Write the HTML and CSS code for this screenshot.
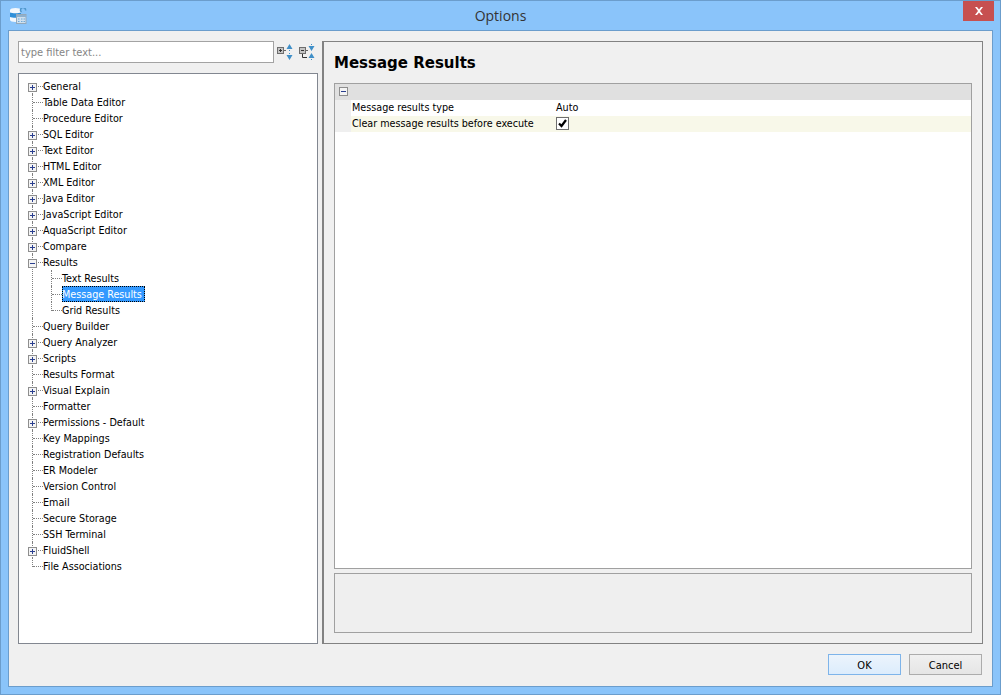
FILE: index.html
```html
<!DOCTYPE html>
<html lang="en">
<head>
<meta charset="utf-8">
<title>Options</title>
<link rel="stylesheet" href="styles.css">
</head>
<body>
<svg class="defs" width="0" height="0" aria-hidden="true">
  <symbol id="plus" viewBox="0 0 9 9"><rect x=".5" y=".5" width="8" height="8" fill="#f4f4f4" stroke="#8e8e8e"/><path d="M2 4.500h5M4.500 2v5" stroke="#2a3f8f" fill="none"/></symbol>
  <symbol id="minus" viewBox="0 0 9 9"><rect x=".5" y=".5" width="8" height="8" fill="#f4f4f4" stroke="#8e8e8e"/><path d="M2 4.500h5" stroke="#2a3f8f" fill="none"/></symbol>
</svg>
<div class="window">
  <header class="titlebar">
    <svg class="appicon" width="17" height="16" viewBox="0 0 17 16">
      <path d="M0 2C0 .8 2.500 0 5.500 0S11 .8 11 2v10c0 1.200-2.500 2-5.500 2S0 13.200 0 12Z" fill="#f4f8fc"/>
      <path d="M0 4.500c2 1 9 1 11 0V9c-2 1-9 1-11 0Z" fill="#2f8fd8"/>
      <path d="M11.500 4a2.500 2.500 0 1 1 4-1.500" fill="none" stroke="#4f97cc" stroke-width="1.500"/>
      <rect x="6.500" y="6.500" width="9.500" height="9" fill="#cfe0ee" stroke="#93a8ba"/>
      <path d="M7 7h9v2H7z" fill="#8fb0cc"/>
      <path d="M8 11h1.500M11 11h1.500M13.500 11h1.500M8 13.500h1.500M11 13.500h1.500M13.500 13.500h1.500" stroke="#6fa8d8"/>
    </svg>
    <h1 class="wintitle">Options</h1>
    <button class="close" aria-label="Close">
      <svg width="10" height="8" viewBox="0 0 10 8"><path d="M1 0h2l2 2.500L7 0h2L6 4l3 4H7L5 5.500 3 8H1l3-4z" fill="#fff"/></svg>
    </button>
  </header>
  <div class="client">
    <div class="panes">
      <aside class="leftpane">
        <div class="filterbar">
          <input class="filter" type="text" placeholder="type filter text...">
          <svg class="toolicon" width="16" height="18" viewBox="0 0 16 18">
            <rect x=".5" y="4.500" width="6" height="6" fill="#c4c4c4" stroke="#6e6e6e"/>
            <path d="M2 7.500h3M3.500 6v3" stroke="#333"/>
            <path d="M7 7.500h2" stroke="#666"/>
            <path d="M12.500 1l3 5h-6zM12.500 17l-3-5h6z" fill="#3f8fc8"/>
            <path d="M12.500 7v1M12.500 10v1" stroke="#3f8fc8"/>
          </svg>
          <svg class="toolicon second" width="16" height="18" viewBox="0 0 16 18">
            <rect x=".5" y="4.500" width="6" height="6" fill="#c4c4c4" stroke="#6e6e6e"/>
            <path d="M2 7.500h3" stroke="#333"/>
            <path d="M3.500 11v3.500H8" stroke="#333" fill="none"/>
            <path d="M7 7.500h2" stroke="#666"/>
            <path d="M12.500 8l-3-5h6zM12.500 10l3 5h-6z" fill="#3f8fc8"/>
            <path d="M12.500 1v1M12.500 16v1" stroke="#3f8fc8"/>
          </svg>
        </div>
        <div class="treebox">
          <ul class="tree">
            <li><div class="row"><svg class="exp"><use href="#plus"/></svg><span class="label">General</span></div></li>
            <li><div class="row"><span class="label">Table Data Editor</span></div></li>
            <li><div class="row"><span class="label">Procedure Editor</span></div></li>
            <li><div class="row"><svg class="exp"><use href="#plus"/></svg><span class="label">SQL Editor</span></div></li>
            <li><div class="row"><svg class="exp"><use href="#plus"/></svg><span class="label">Text Editor</span></div></li>
            <li><div class="row"><svg class="exp"><use href="#plus"/></svg><span class="label">HTML Editor</span></div></li>
            <li><div class="row"><svg class="exp"><use href="#plus"/></svg><span class="label">XML Editor</span></div></li>
            <li><div class="row"><svg class="exp"><use href="#plus"/></svg><span class="label">Java Editor</span></div></li>
            <li><div class="row"><svg class="exp"><use href="#plus"/></svg><span class="label">JavaScript Editor</span></div></li>
            <li><div class="row"><svg class="exp"><use href="#plus"/></svg><span class="label">AquaScript Editor</span></div></li>
            <li><div class="row"><svg class="exp"><use href="#plus"/></svg><span class="label">Compare</span></div></li>
            <li>
              <div class="row"><svg class="exp"><use href="#minus"/></svg><span class="label">Results</span></div>
              <ul class="subtree">
                <li><div class="row"><span class="label">Text Results</span></div></li>
                <li><div class="row"><span class="label selected">Message Results</span></div></li>
                <li><div class="row"><span class="label">Grid Results</span></div></li>
              </ul>
            </li>
            <li><div class="row"><span class="label">Query Builder</span></div></li>
            <li><div class="row"><svg class="exp"><use href="#plus"/></svg><span class="label">Query Analyzer</span></div></li>
            <li><div class="row"><svg class="exp"><use href="#plus"/></svg><span class="label">Scripts</span></div></li>
            <li><div class="row"><span class="label">Results Format</span></div></li>
            <li><div class="row"><svg class="exp"><use href="#plus"/></svg><span class="label">Visual Explain</span></div></li>
            <li><div class="row"><span class="label">Formatter</span></div></li>
            <li><div class="row"><svg class="exp"><use href="#plus"/></svg><span class="label">Permissions - Default</span></div></li>
            <li><div class="row"><span class="label">Key Mappings</span></div></li>
            <li><div class="row"><span class="label">Registration Defaults</span></div></li>
            <li><div class="row"><span class="label">ER Modeler</span></div></li>
            <li><div class="row"><span class="label">Version Control</span></div></li>
            <li><div class="row"><span class="label">Email</span></div></li>
            <li><div class="row"><span class="label">Secure Storage</span></div></li>
            <li><div class="row"><span class="label">SSH Terminal</span></div></li>
            <li><div class="row"><svg class="exp"><use href="#plus"/></svg><span class="label">FluidShell</span></div></li>
            <li><div class="row"><span class="label">File Associations</span></div></li>
          </ul>
        </div>
      </aside>
      <main class="rightpane">
        <h2 class="pagetitle">Message Results</h2>
        <div class="props">
          <div class="propshead"><svg class="exp-head"><use href="#minus"/></svg></div>
          <div class="prop"><span class="propname">Message results type</span><span class="propvalue">Auto</span></div>
          <div class="prop alt"><span class="propname">Clear message results before execute</span><span class="propvalue"><span class="check"><svg width="11" height="11" viewBox="0 0 11 11"><path d="M2 5.500l2.500 2.500L9 2" fill="none" stroke="#000" stroke-width="2.200"/></svg></span></span></div>
        </div>
        <div class="descbox"></div>
      </main>
    </div>
    <footer class="actions">
      <button class="btn primary">OK</button>
      <button class="btn">Cancel</button>
    </footer>
  </div>
</div>
</body>
</html>
```

FILE: styles.css
```css
* { box-sizing: border-box; }
html, body { margin: 0; padding: 0; }
body {
  width: 1001px;
  height: 695px;
  overflow: hidden;
  font-family: "DejaVu Sans Condensed", "DejaVu Sans", sans-serif;
  font-size: 10.7px;
  color: #000;
}
.defs { display: block; height: 0; }
.window {
  width: 1001px;
  height: 695px;
  display: flex;
  flex-direction: column;
  background: #8ac4fa;
  border: 1px solid #6b9dcc;
}
.titlebar {
  height: 29px;
  flex: none;
  position: relative;
  display: flex;
  justify-content: center;
}
.appicon { position: absolute; left: 9px; top: 7px; }
.wintitle {
  margin: 0;
  font-family: "Open Sans", "Noto Sans", sans-serif;
  font-size: 14px;
  font-weight: 400;
  line-height: 29px;
  color: #333;
}
.close {
  position: absolute;
  right: 6px;
  top: 0;
  width: 31px;
  height: 20px;
  padding: 0;
  border: 0;
  background: #c75050;
  display: flex;
  align-items: center;
  justify-content: center;
}
.client {
  flex: 1;
  margin: 0 7px 7px;
  background: #f0f0f0;
  border: 1px solid #6b9dcc;
  display: flex;
  flex-direction: column;
  min-height: 0;
}
.panes {
  display: flex;
  padding: 10px 9px 0 9px;
  height: 613px;
}
.leftpane {
  width: 300px;
  flex: none;
  display: flex;
  flex-direction: column;
}
.filterbar {
  height: 22px;
  display: flex;
  align-items: center;
  margin-bottom: 10px;
  flex: none;
}
.filter {
  width: 256px;
  height: 22px;
  border: 1px solid #a3a3a3;
  background: #fff;
  padding: 0 2px;
  font: inherit;
  font-size: 11px;
  outline: 0;
}
.filter::placeholder { color: #858585; opacity: 1; }
.toolicon { margin-left: 3px; flex: none; }
.toolicon.second { margin-left: 6px; }
.treebox {
  flex: 1;
  background: #fff;
  border: 1px solid #828790;
  padding-top: 4px;
  min-height: 0;
}
.tree, .subtree { list-style: none; margin: 0; padding: 0; }
.tree li { position: relative; }
.tree li::before {
  content: "";
  position: absolute;
  left: 13px;
  top: 0;
  bottom: 0;
  border-left: 1px dotted #808080;
}
.tree > li:first-child::before { top: 9px; }
.tree > li:last-child::before,
.subtree > li:last-child::before { bottom: auto; height: 9px; }
.subtree { margin-left: 19px; }
.row {
  position: relative;
  height: 16px;
  padding-left: 24px;
  display: flex;
  align-items: center;
}
.row::before {
  content: "";
  position: absolute;
  left: 14px;
  top: 8px;
  width: 10px;
  border-top: 1px dotted #808080;
}
.exp {
  position: absolute;
  left: 9px;
  top: 5px;
  width: 9px;
  height: 9px;
  z-index: 1;
}
.label {
  height: 16px;
  padding-top: 2px;
  line-height: 14px;
  white-space: nowrap;
  position: relative;
}
.label.selected {
  background: #3399ff;
  color: #fff;
  padding-right: 3px;
  outline: 1px dotted #000;
  outline-offset: -1px;
}
.rightpane {
  flex: 1;
  margin-left: 4px;
  border: 1px solid #828282;
  border-left-width: 2px;
  padding: 0 10px 10px 10px;
  display: flex;
  flex-direction: column;
  min-width: 0;
}
.pagetitle {
  margin: 0;
  height: 41px;
  padding-top: 2px;
  flex: none;
  font-family: "DejaVu Sans", sans-serif;
  font-size: 15px;
  font-weight: 700;
  line-height: 39px;
}
.props {
  flex: 1;
  background: #fff;
  border: 1px solid #a0a0a0;
  min-height: 0;
}
.propshead {
  height: 16px;
  background: #e0e0e0;
  position: relative;
}
.exp-head {
  position: absolute;
  left: 4px;
  top: 3px;
  width: 9px;
  height: 9px;
}
.prop {
  height: 16px;
  padding-bottom: 2px;
  display: flex;
  align-items: center;
  border-left: 16px solid #efefef;
}
.prop.alt { background: #f8f8e9; }
.propname { width: 205px; flex: none; padding-left: 1px; white-space: nowrap; }
.propvalue { display: flex; align-items: center; }
.check {
  width: 13px;
  height: 13px;
  border: 1px solid #6e6e6e;
  background: #fff;
  display: flex;
  align-items: center;
  justify-content: center;
}
.descbox {
  height: 60px;
  flex: none;
  margin-top: 4px;
  background: #efefef;
  border: 1px solid #a0a0a0;
}
.actions {
  flex: 1;
  display: flex;
  justify-content: flex-end;
  align-items: flex-start;
  gap: 8px;
  padding: 10px 10px 0 0;
}
.btn {
  width: 73px;
  height: 21px;
  padding: 1px 0 0;
  border: 1px solid #acacac;
  background: linear-gradient(#f0f0f0, #e5e5e5);
  font: inherit;
  font-size: 11px;
  color: #000;
}
.btn.primary {
  border-color: #7eb4ea;
  background: linear-gradient(#ecf4fc, #dcecfc);
}
```
